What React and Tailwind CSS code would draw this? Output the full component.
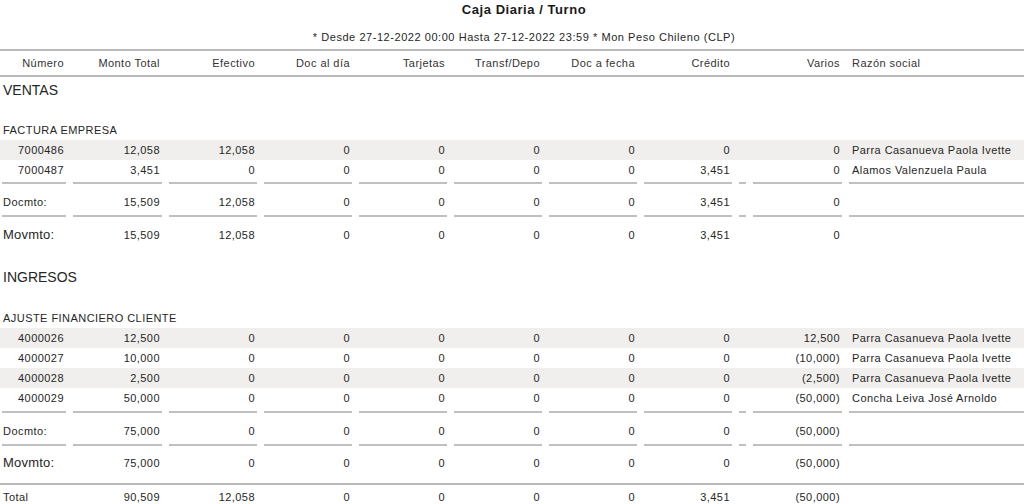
import React from "react";

const COLS = "grid-cols-[64px_89px_88px_88px_88px_88px_88px_88px_7px_89px_1fr]";

function Row({ cells, shaded, className = "", labelLeft = false, big = false }) {
  return (
    <div className={`grid ${COLS} gap-x-[7px] pl-[2px] h-[20px] items-center ${shaded ? "bg-[#f0efed]" : ""} ${className}`}>
      {cells.map((c, i) => {
        if (i === 10) {
          return (
            <div key={i} className="pl-[3px] text-left whitespace-nowrap overflow-hidden">
              {c}
            </div>
          );
        }
        if (i === 0 && labelLeft) {
          return (
            <div key={i} className={`text-left pl-[1px] whitespace-nowrap ${big ? "text-[13px] tracking-[0.2px]" : ""}`}>
              {c}
            </div>
          );
        }
        return (
          <div key={i} className="text-right pr-[2px] whitespace-nowrap">
            {c}
          </div>
        );
      })}
    </div>
  );
}

function Lines({ className = "" }) {
  return (
    <div className={`grid ${COLS} gap-x-[7px] pl-[2px] ${className}`}>
      {Array.from({ length: 11 }).map((_, i) => (
        <div key={i} className="h-[2px] bg-[#c0c0c0]" />
      ))}
    </div>
  );
}

const header = ["Número", "Monto Total", "Efectivo", "Doc al día", "Tarjetas", "Transf/Depo", "Doc a fecha", "Crédito", "", "Varios", "Razón social"];

const ventas = [
  ["7000486", "12,058", "12,058", "0", "0", "0", "0", "0", "", "0", "Parra Casanueva Paola Ivette"],
  ["7000487", "3,451", "0", "0", "0", "0", "0", "3,451", "", "0", "Alamos Valenzuela Paula"],
];
const ventasDoc = ["Docmto:", "15,509", "12,058", "0", "0", "0", "0", "3,451", "", "0", ""];
const ventasMov = ["Movmto:", "15,509", "12,058", "0", "0", "0", "0", "3,451", "", "0", ""];

const ingresos = [
  ["4000026", "12,500", "0", "0", "0", "0", "0", "0", "", "12,500", "Parra Casanueva Paola Ivette"],
  ["4000027", "10,000", "0", "0", "0", "0", "0", "0", "", "(10,000)", "Parra Casanueva Paola Ivette"],
  ["4000028", "2,500", "0", "0", "0", "0", "0", "0", "", "(2,500)", "Parra Casanueva Paola Ivette"],
  ["4000029", "50,000", "0", "0", "0", "0", "0", "0", "", "(50,000)", "Concha Leiva José Arnoldo"],
];
const ingDoc = ["Docmto:", "75,000", "0", "0", "0", "0", "0", "0", "", "(50,000)", ""];
const ingMov = ["Movmto:", "75,000", "0", "0", "0", "0", "0", "0", "", "(50,000)", ""];
const total = ["Total", "90,509", "12,058", "0", "0", "0", "0", "3,451", "", "(50,000)", ""];

export default function App() {
  return (
    <div className="w-[1024px] h-[504px] overflow-hidden bg-white text-[#262626] text-[11px] tracking-[0.45px] font-['Liberation_Sans',Arial,sans-serif]">
      <div className="pl-[24px] text-center h-[20px] leading-[20px] text-[13px] tracking-[0.55px] font-bold text-[#1a1a1a]">
        Caja Diaria / Turno
      </div>
      <div className="pl-[24px] text-center mt-[7px] h-[20px] leading-[20px] text-[11px] tracking-[0.55px]">
        * Desde 27-12-2022 00:00 Hasta 27-12-2022 23:59 * Mon Peso Chileno (CLP)
      </div>
      <div className="mt-[2px] h-[2px] bg-[#bababa]" />
      <div className={`grid ${COLS} gap-x-[7px] pl-[2px] h-[24px] items-center text-[#333]`}>
        {header.map((h, i) =>
          i === 10 ? (
            <div key={i} className="pl-[3px] text-left">{h}</div>
          ) : (
            <div key={i} className="text-right pr-[2px] whitespace-nowrap">{h}</div>
          )
        )}
      </div>
      <div className="h-[2px] bg-[#bababa]" />

      <div className="h-[26px] leading-[26px] pl-[3px] text-[14px] tracking-normal">VENTAS</div>
      <div className="mt-[17px] h-[20px] leading-[20px] pl-[3px]">FACTURA EMPRESA</div>
      {ventas.map((r, i) => (
        <Row key={i} cells={r} shaded={i % 2 === 0} />
      ))}
      <Lines className="mt-[2px]" />
      <Row cells={ventasDoc} labelLeft className="mt-[8px]" />
      <Lines className="mt-[3px]" />
      <Row cells={ventasMov} labelLeft big className="mt-[8px]" />

      <div className="mt-[22px] h-[20px] leading-[20px] pl-[3px] text-[14px] tracking-normal">INGRESOS</div>
      <div className="mt-[21px] h-[20px] leading-[20px] pl-[3px]">AJUSTE FINANCIERO CLIENTE</div>
      {ingresos.map((r, i) => (
        <Row key={i} cells={r} shaded={i % 2 === 0} />
      ))}
      <Lines className="mt-[3px]" />
      <Row cells={ingDoc} labelLeft className="mt-[8px]" />
      <Lines className="mt-[3px]" />
      <Row cells={ingMov} labelLeft big className="mt-[7px]" />
      <div className="mt-[10px] h-[2px] bg-[#bababa]" />
      <Row cells={total} labelLeft className="mt-[2px]" />
    </div>
  );
}
